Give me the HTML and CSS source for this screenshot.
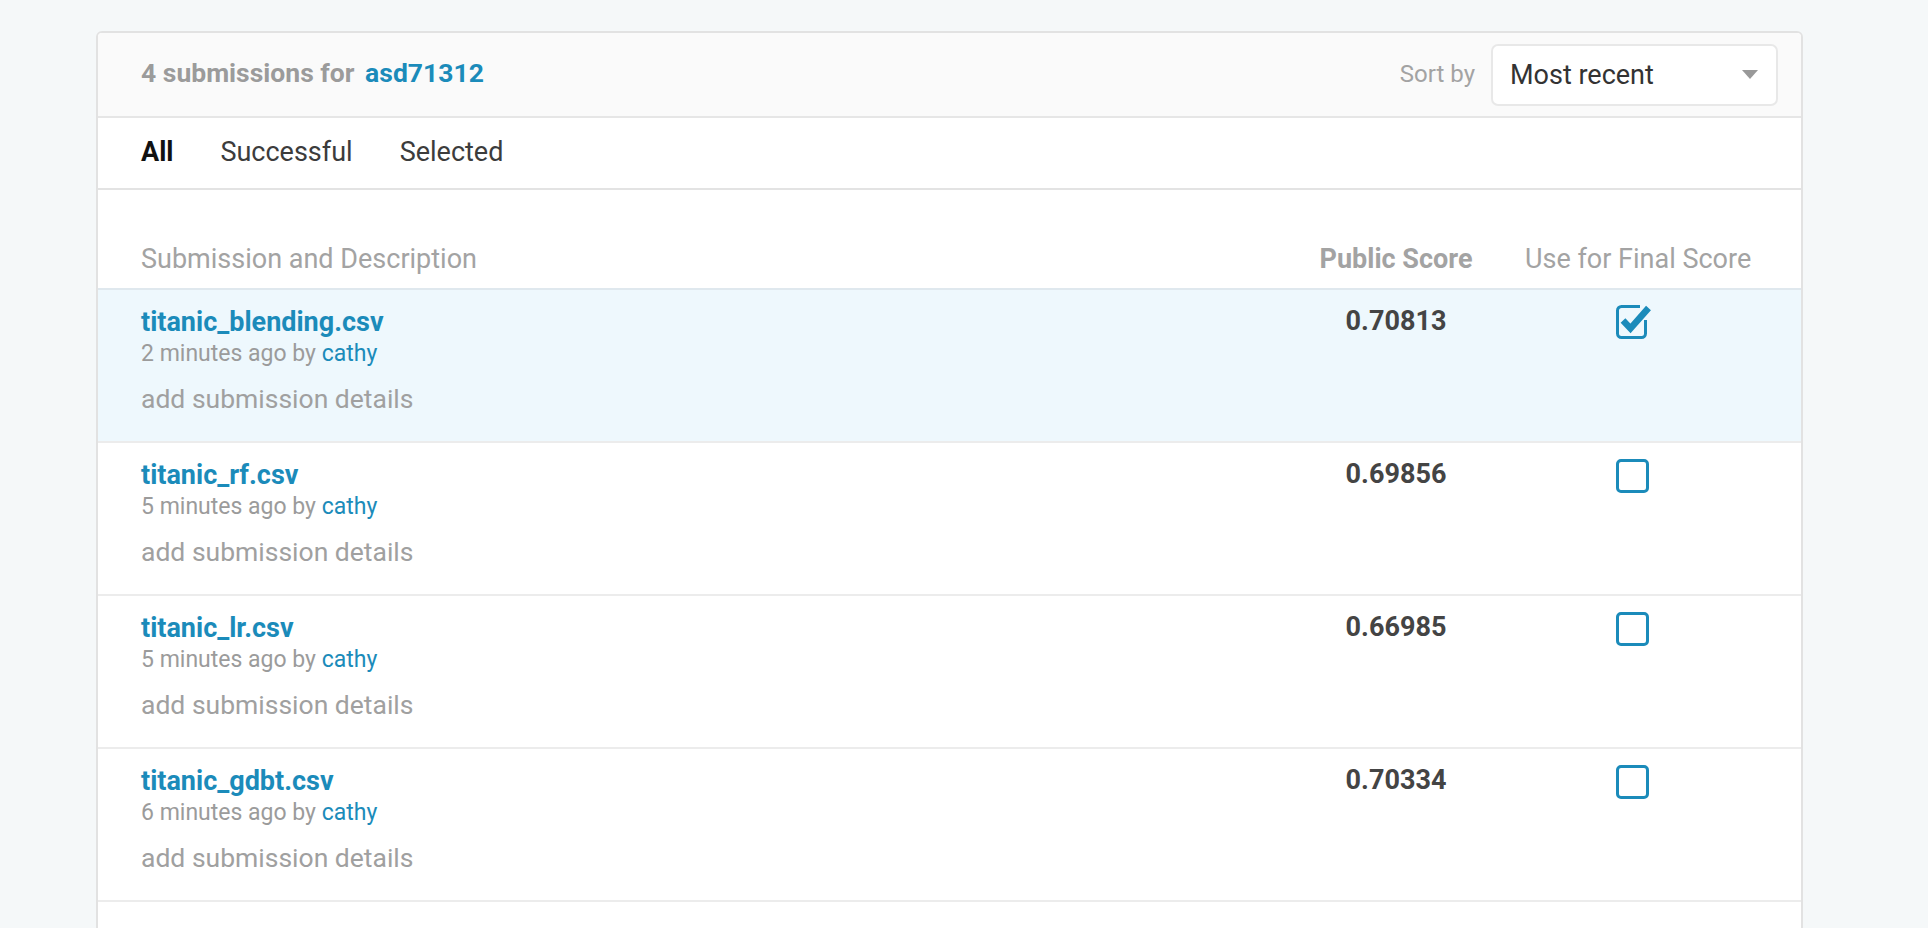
FILE: index.html
```html
<!DOCTYPE html>
<html lang="en">
<head>
<meta charset="utf-8">
<title>Submissions</title>
<link rel="stylesheet" href="styles.css">
</head>
<body>
<div class="page">
  <div class="card">
    <div class="card-header">
      <div class="title">4 submissions for <a class="team" href="#">asd71312</a></div>
      <div class="sort">
        <span class="sort-label">Sort by</span>
        <div class="select"><span>Most recent</span><span class="caret"></span></div>
      </div>
    </div>
    <nav class="tabs">
      <a class="tab active" href="#">All</a>
      <a class="tab" href="#">Successful</a>
      <a class="tab" href="#">Selected</a>
    </nav>
    <div class="table">
      <div class="thead">
        <div>Submission and Description</div>
        <div class="score-h">Public Score</div>
        <div class="final-h">Use for Final Score</div>
      </div>

      <div class="row selected">
        <div class="desc">
          <a class="name" href="#">titanic_blending.csv</a>
          <div class="meta">2 minutes ago by <a href="#">cathy</a></div>
          <div class="details">add submission details</div>
        </div>
        <div class="score">0.70813</div>
        <div class="use">
          <svg class="box-checked" width="33" height="37" viewBox="0 0 33 37" aria-hidden="true">
            <path d="M29.5 18 V31.5 a4 4 0 0 1 -4 4 H5.5 a4 4 0 0 1 -4 -4 V8.5 a4 4 0 0 1 4 -4 H24" fill="none" stroke="#1b8bba" stroke-width="3"/>
            <path d="M7 18.5 L14.5 26.5 L32.5 6" fill="none" stroke="#1b8bba" stroke-width="6.5" stroke-linejoin="miter"/>
          </svg>
        </div>
      </div>

      <div class="row">
        <div class="desc">
          <a class="name" href="#">titanic_rf.csv</a>
          <div class="meta">5 minutes ago by <a href="#">cathy</a></div>
          <div class="details">add submission details</div>
        </div>
        <div class="score">0.69856</div>
        <div class="use"><span class="box"></span></div>
      </div>

      <div class="row">
        <div class="desc">
          <a class="name" href="#">titanic_lr.csv</a>
          <div class="meta">5 minutes ago by <a href="#">cathy</a></div>
          <div class="details">add submission details</div>
        </div>
        <div class="score">0.66985</div>
        <div class="use"><span class="box"></span></div>
      </div>

      <div class="row">
        <div class="desc">
          <a class="name" href="#">titanic_gdbt.csv</a>
          <div class="meta">6 minutes ago by <a href="#">cathy</a></div>
          <div class="details">add submission details</div>
        </div>
        <div class="score">0.70334</div>
        <div class="use"><span class="box"></span></div>
      </div>

      <div class="more"></div>
    </div>
  </div>
</div>
</body>
</html>
```

FILE: styles.css
```css
body {
  margin: 0;
  background: #f5f8f9;
  font-family: Roboto, "Liberation Sans", Arial, sans-serif;
}

a {
  text-decoration: none;
}

.page {
  padding: 31px 0 0 96px;
}

.card {
  width: 1707px;
  box-sizing: border-box;
  border: 2px solid #e2e2e2;
  border-radius: 6px;
  background: #fff;
  overflow: hidden;
}

.card-header {
  height: 83px;
  display: flex;
  align-items: center;
  justify-content: space-between;
  padding: 0 23px 0 43px;
  background: #fafafa;
  border-bottom: 2px solid #e6e6e6;
}

.title {
  font-size: 26.5px;
  font-weight: 700;
  color: #9b9b9b;
  margin-bottom: 5px;
}

.team {
  color: #1b8bba;
  margin-left: 4px;
}

.sort {
  display: flex;
  align-items: center;
  gap: 16px;
}

.sort-label {
  font-size: 24px;
  color: #a3a3a3;
  margin-bottom: 2px;
}

.select {
  width: 287px;
  height: 62px;
  box-sizing: border-box;
  border: 2px solid #e8e8e8;
  border-radius: 7px;
  background: #fff;
  display: flex;
  align-items: center;
  justify-content: space-between;
  padding: 0 18px 0 17px;
  font-size: 27px;
  color: #333;
}

.caret {
  width: 0;
  height: 0;
  border-left: 8.5px solid transparent;
  border-right: 8.5px solid transparent;
  border-top: 9px solid #999;
}

.tabs {
  height: 68px;
  padding: 0 43px 2px;
  display: flex;
  align-items: center;
  gap: 47px;
  border-bottom: 2px solid #e3e3e3;
}

.tab {
  font-size: 27px;
  color: #3c3c3c;
}

.tab.active {
  font-weight: 700;
  color: #111;
}

.thead,
.row {
  display: grid;
  grid-template-columns: 1fr 200px 226px;
  column-gap: 29px;
}

.thead {
  padding: 53px 50px 12px 43px;
  border-bottom: 2px solid #dfe8ee;
  font-size: 27px;
  line-height: 33px;
  color: #a3a3a3;
  white-space: nowrap;
}

.score-h {
  font-weight: 700;
  text-align: center;
}

.final-h {
  text-align: center;
}

.row {
  padding: 16px 50px 26px 43px;
  border-bottom: 2px solid #ececec;
}

.row.selected {
  background: #eef8fd;
}

.name {
  display: block;
  font-size: 27px;
  font-weight: 700;
  line-height: 33px;
  color: #1b8bba;
}

.meta {
  margin-top: 1px;
  font-size: 23px;
  line-height: 28px;
  color: #9b9b9b;
}

.meta a {
  color: #1b8bba;
}

.details {
  margin-top: 14px;
  font-size: 26.5px;
  line-height: 33px;
  color: #a0a0a0;
}

.score {
  margin-top: -1px;
  text-align: center;
  font-size: 27px;
  font-weight: 700;
  line-height: 33px;
  color: #444;
}

.use {
  text-align: center;
}

.box {
  display: inline-block;
  vertical-align: top;
  width: 33px;
  height: 34px;
  box-sizing: border-box;
  border: 3px solid #1b8bba;
  border-radius: 5px;
  margin-right: 12px;
}

.box-checked {
  display: inline-block;
  vertical-align: top;
  margin-top: -4px;
  margin-right: 12px;
  overflow: visible;
}

.more {
  height: 80px;
}
```
